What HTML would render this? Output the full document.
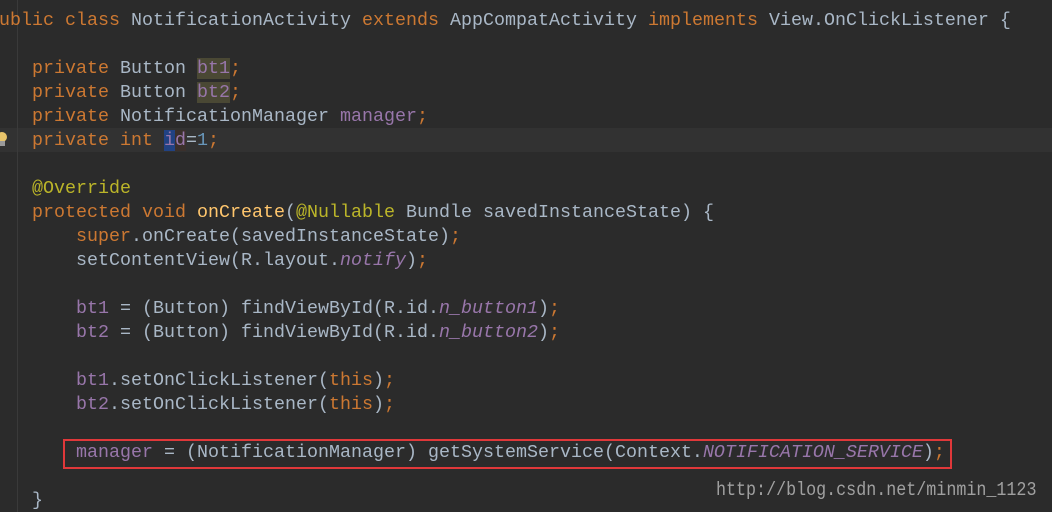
<!DOCTYPE html>
<html><head><meta charset="utf-8"><style>
html,body{margin:0;padding:0;background:#2b2b2b;width:1052px;height:512px;overflow:hidden;position:relative}
.code{position:absolute;left:-12px;top:9px;font-family:"Liberation Mono",monospace;font-size:18.33px;line-height:24px;color:#a9b7c6}
.l{height:24px;white-space:pre}
.k{color:#cc7832}.f{color:#9876aa}.n{color:#6897bb}.a{color:#bbb529}.m{color:#ffc66d}.i{font-style:italic;color:#9876aa}
.hl{background:#4a4834}
.cur{position:absolute;left:0;top:128px;width:1052px;height:24px;background:#323232}
.box{position:absolute;left:63px;top:439px;width:885px;height:26px;border:2px solid #e0383a}
.guide{position:absolute;left:17px;top:0;width:1px;height:512px;background:#3a3a3a}
.wm{position:absolute;left:716px;top:480px;font-family:"Liberation Mono",monospace;font-size:16.7px;color:#a0a0a0;transform:scaleY(1.15);transform-origin:left top}
.bulb{position:absolute;left:-3px;top:132px;width:10px;height:10px;border-radius:50%;background:#e8c46a}
.bulb2{position:absolute;left:-1px;top:141px;width:6px;height:5px;background:#9a9a9a}
</style></head><body>
<div class="cur"></div>
<div class="guide"></div>
<div class="bulb"></div><div class="bulb2"></div>
<div class="code"><div class="l"><span class="k">public class </span>NotificationActivity <span class="k">extends </span>AppCompatActivity <span class="k">implements </span>View.OnClickListener {</div><div class="l"> </div><div class="l">    <span class="k">private </span>Button <span class="f hl">bt1</span><span class="k">;</span></div><div class="l">    <span class="k">private </span>Button <span class="f hl">bt2</span><span class="k">;</span></div><div class="l">    <span class="k">private </span>NotificationManager <span class="f">manager</span><span class="k">;</span></div><div class="l">    <span class="k">private int </span><span class="f"><span style="background:#214283">i</span><span style="background:#3b302c">d</span></span>=<span class="n">1</span><span class="k">;</span></div><div class="l"> </div><div class="l">    <span class="a">@Override</span></div><div class="l">    <span class="k">protected void </span><span class="m">onCreate</span>(<span class="a">@Nullable </span>Bundle savedInstanceState) {</div><div class="l">        <span class="k">super</span>.onCreate(savedInstanceState)<span class="k">;</span></div><div class="l">        setContentView(R.layout.<span class="i">notify</span>)<span class="k">;</span></div><div class="l"> </div><div class="l">        <span class="f">bt1 </span>= (Button) findViewById(R.id.<span class="i">n_button1</span>)<span class="k">;</span></div><div class="l">        <span class="f">bt2 </span>= (Button) findViewById(R.id.<span class="i">n_button2</span>)<span class="k">;</span></div><div class="l"> </div><div class="l">        <span class="f">bt1</span>.setOnClickListener(<span class="k">this</span>)<span class="k">;</span></div><div class="l">        <span class="f">bt2</span>.setOnClickListener(<span class="k">this</span>)<span class="k">;</span></div><div class="l"> </div><div class="l">        <span class="f">manager </span>= (NotificationManager) getSystemService(Context.<span class="i">NOTIFICATION_SERVICE</span>)<span class="k">;</span></div><div class="l"> </div><div class="l">    }</div></div>
<div class="box"></div>
<div class="wm">http://blog.csdn.net/minmin_1123</div>
</body></html>
